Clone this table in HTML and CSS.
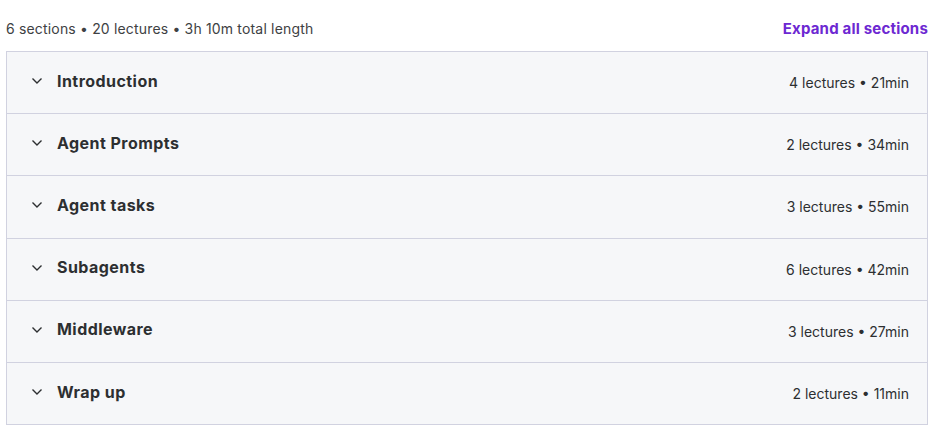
FILE: index.html
```html
<!DOCTYPE html>
<html lang="en">
<head>
    <meta charset="UTF-8">
    <meta name="viewport" content="width=device-width, initial-scale=1.0">
    <title>Course content</title>
    <link rel="stylesheet" href="styles.css">
</head>
<body>

<div class="curriculum">
    <div class="curriculum-header">
        <span class="summary">6 sections • 20 lectures • 3h 10m total length</span>
        <button class="expand-btn">Expand all sections</button>
    </div>

    <div class="sections">
        <div class="section">
            <svg class="chevron" viewBox="0 0 12 8"><path d="M1.5 1.5 L6 6 L10.5 1.5"/></svg>
            <span class="section-title">Introduction</span>
            <span class="section-meta">4 lectures • 21min</span>
        </div>
        <div class="section">
            <svg class="chevron" viewBox="0 0 12 8"><path d="M1.5 1.5 L6 6 L10.5 1.5"/></svg>
            <span class="section-title">Agent Prompts</span>
            <span class="section-meta">2 lectures • 34min</span>
        </div>
        <div class="section">
            <svg class="chevron" viewBox="0 0 12 8"><path d="M1.5 1.5 L6 6 L10.5 1.5"/></svg>
            <span class="section-title">Agent tasks</span>
            <span class="section-meta">3 lectures • 55min</span>
        </div>
        <div class="section">
            <svg class="chevron" viewBox="0 0 12 8"><path d="M1.5 1.5 L6 6 L10.5 1.5"/></svg>
            <span class="section-title">Subagents</span>
            <span class="section-meta">6 lectures • 42min</span>
        </div>
        <div class="section">
            <svg class="chevron" viewBox="0 0 12 8"><path d="M1.5 1.5 L6 6 L10.5 1.5"/></svg>
            <span class="section-title">Middleware</span>
            <span class="section-meta">3 lectures • 27min</span>
        </div>
        <div class="section">
            <svg class="chevron" viewBox="0 0 12 8"><path d="M1.5 1.5 L6 6 L10.5 1.5"/></svg>
            <span class="section-title">Wrap up</span>
            <span class="section-meta">2 lectures • 11min</span>
        </div>
    </div>
</div>

</body>
</html>
```

FILE: styles.css
```css
body {
    font-family: Inter, 'Noto Sans', sans-serif;
    background: #ffffff;
    color: #2d2f31;
    margin: 0;
    padding: 0 6px;
}
.curriculum {
    width: 922px;
}
.curriculum-header {
    display: flex;
    justify-content: space-between;
    align-items: center;
    height: 51px;
    padding-top: 6px;
    box-sizing: border-box;
}
.summary {
    font-size: 14px;
    letter-spacing: 0.17px;
    color: #3e4143;
}
.expand-btn {
    background: none;
    border: none;
    padding: 0;
    font-family: inherit;
    font-size: 15px;
    font-weight: 700;
    letter-spacing: 0.2px;
    color: #6d28d2;
    cursor: pointer;
}
.sections {
    border: 1px solid #d1d2e0;
    border-bottom: none;
}
.section {
    display: flex;
    align-items: center;
    height: 61.2px;
    padding: 0 18px 0 24px;
    background: #f6f7f9;
    border-bottom: 1px solid #d1d2e0;
}
.chevron {
    width: 12px;
    height: 8px;
    margin-right: 14px;
    margin-top: -3px;
    fill: none;
    stroke: #2d2f31;
    stroke-width: 1.4;
}
.section-title {
    flex: 1;
    font-size: 16px;
    font-weight: 700;
    letter-spacing: 0.45px;
    color: #2d2f31;
    margin-top: -4px;
}
.section-meta {
    font-size: 14px;
    color: #2d2f31;
}
```
